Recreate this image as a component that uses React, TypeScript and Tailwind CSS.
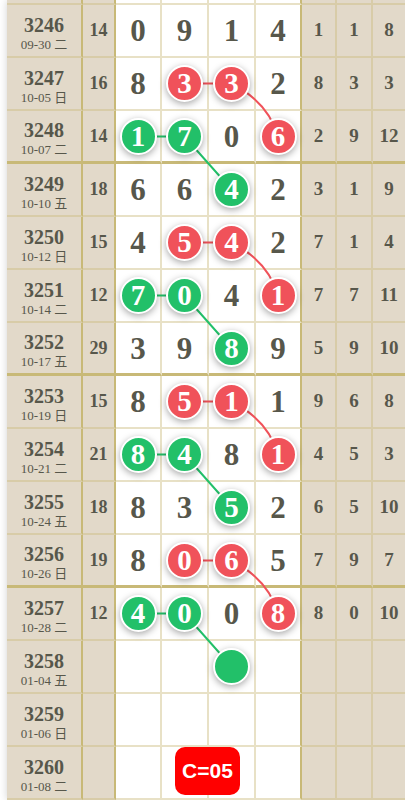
import React from 'react';

type Mark = 'r' | 'g' | undefined;

interface Row {
    id: string;
    date: string;
    sum: string;
    nums: (string | null)[];
    marks: Mark[];
    right: string[];
    thick?: boolean;
}

const rows: Row[] = [
    { id: '3246', date: '09-30 二', sum: '14', nums: ['0', '9', '1', '4'], marks: [], right: ['1', '1', '8'] },
    { id: '3247', date: '10-05 日', sum: '16', nums: ['8', '3', '3', '2'], marks: [undefined, 'r', 'r'], right: ['8', '3', '3'] },
    { id: '3248', date: '10-07 二', sum: '14', nums: ['1', '7', '0', '6'], marks: ['g', 'g', undefined, 'r'], right: ['2', '9', '12'], thick: true },
    { id: '3249', date: '10-10 五', sum: '18', nums: ['6', '6', '4', '2'], marks: [undefined, undefined, 'g'], right: ['3', '1', '9'] },
    { id: '3250', date: '10-12 日', sum: '15', nums: ['4', '5', '4', '2'], marks: [undefined, 'r', 'r'], right: ['7', '1', '4'] },
    { id: '3251', date: '10-14 二', sum: '12', nums: ['7', '0', '4', '1'], marks: ['g', 'g', undefined, 'r'], right: ['7', '7', '11'] },
    { id: '3252', date: '10-17 五', sum: '29', nums: ['3', '9', '8', '9'], marks: [undefined, undefined, 'g'], right: ['5', '9', '10'], thick: true },
    { id: '3253', date: '10-19 日', sum: '15', nums: ['8', '5', '1', '1'], marks: [undefined, 'r', 'r'], right: ['9', '6', '8'] },
    { id: '3254', date: '10-21 二', sum: '21', nums: ['8', '4', '8', '1'], marks: ['g', 'g', undefined, 'r'], right: ['4', '5', '3'] },
    { id: '3255', date: '10-24 五', sum: '18', nums: ['8', '3', '5', '2'], marks: [undefined, undefined, 'g'], right: ['6', '5', '10'] },
    { id: '3256', date: '10-26 日', sum: '19', nums: ['8', '0', '6', '5'], marks: [undefined, 'r', 'r'], right: ['7', '9', '7'], thick: true },
    { id: '3257', date: '10-28 二', sum: '12', nums: ['4', '0', '0', '8'], marks: ['g', 'g', undefined, 'r'], right: ['8', '0', '10'] },
    { id: '3258', date: '01-04 五', sum: '', nums: [null, null, '', null], marks: [undefined, undefined, 'g'], right: ['', '', ''] },
    { id: '3259', date: '01-06 日', sum: '', nums: [null, null, null, null], marks: [], right: ['', '', ''] },
    { id: '3260', date: '01-08 二', sum: '', nums: [null, null, null, null], marks: [], right: ['', '', ''] },
];

const serif = "font-['Liberation_Serif','Times_New_Roman',serif]";

// column widths (border-box)
const mainW = ['w-[46px]', 'w-[47px]', 'w-[47px]', 'w-[46px]'];
const mainR = [
    'border-r-2 border-r-[#cbbd80]/45',
    'border-r-2 border-r-[#cbbd80]/45',
    'border-r-2 border-r-[#cbbd80]/45',
    'border-r-2 border-r-[#c8b977]',
];
const rightW = ['w-[35px] border-r-2 border-r-[#cbbd80]/45', 'w-[36px] border-r-2 border-r-[#cbbd80]/45', 'flex-1'];

function bottom(thick?: boolean) {
    return thick ? 'border-b-[3px] border-b-[#c8b977]' : 'border-b-2 border-b-[#cbbd80]/45';
}

function Ball({ mark, value }: { mark: 'r' | 'g'; value: string }) {
    return (
        <div
            className={`relative z-10 flex h-[37px] w-[37px] items-center justify-center rounded-full border-2 border-white shadow-[0_2px_7px_rgba(0,0,0,0.35)] ${
                mark === 'r' ? 'bg-[#f0525a]' : 'bg-[#22c069]'
            }`}
        >
            <span className={`${serif} text-[29px] font-bold leading-none text-white`}>{value}</span>
        </div>
    );
}

function TableRow({ row, last }: { row: Row; last?: boolean }) {
    const b = bottom(row.thick);
    return (
        <div className="flex h-[53px]">
            <div className={`flex w-[76px] flex-col items-center justify-center pt-[6px] bg-[#e2d9c9] border-r-2 border-r-[#c8b977] ${b}`}>
                <span className={`${serif} text-[20px] font-bold leading-[22px] text-[#57574b]`}>{row.id}</span>
                <span className={`font-['Liberation_Serif','Noto_Sans_CJK_SC',serif] text-[13px] leading-[18px] text-[#57574b]`}>{row.date}</span>
            </div>
            <div className={`flex w-[33px] items-center justify-center bg-[#e2d9c9] border-r-2 border-r-[#c8b977] ${b}`}>
                <span className={`${serif} text-[18px] font-bold text-[#57574b]`}>{row.sum}</span>
            </div>
            <div className="relative flex">
                {row.nums.map((n, i) => {
                    const m = row.marks[i];
                    return (
                        <div key={i} className={`flex items-center justify-center bg-white ${mainW[i]} ${mainR[i]} ${b}`}>
                            {m ? (
                                <Ball mark={m} value={n ?? ''} />
                            ) : (
                                <span className={`${serif} text-[31px] font-bold leading-none text-[#57574b]`}>{n}</span>
                            )}
                        </div>
                    );
                })}
                {last && (
                    <div className="absolute left-[59px] top-0 flex h-[48px] w-[65px] items-center justify-center rounded-[10px] bg-[#ff0000]">
                        <span className="font-['Liberation_Sans',Arial,sans-serif] text-[21px] font-bold text-white">C=05</span>
                    </div>
                )}
            </div>
            {row.right.map((v, i) => (
                <div key={i} className={`flex items-center justify-center bg-[#e2d9c9] ${rightW[i]} ${b}`}>
                    <span className={`${serif} text-[19px] font-bold text-[#57574b]`}>{v}</span>
                </div>
            ))}
        </div>
    );
}

function Links() {
    const cy = (k: number) => 30.5 + 53 * k;
    const x0 = 138;
    const x1 = 184.5;
    const x2 = 231.5;
    const x3 = 278;
    return (
        <svg className="pointer-events-none absolute left-0 top-0 z-[5]" width="405" height="800">
            {[1, 4, 7, 10].map((k) => (
                <path
                    key={'r' + k}
                    d={`M${x1} ${cy(k)} L${x2} ${cy(k)} Q${x2 + 37} ${cy(k) + 19} ${x3} ${cy(k + 1)}`}
                    fill="none"
                    stroke="#f0525a"
                    strokeWidth="2"
                />
            ))}
            {[2, 5, 8, 11].map((k) => (
                <path
                    key={'g' + k}
                    d={`M${x0} ${cy(k)} L${x1} ${cy(k)} L${x2} ${cy(k + 1)}`}
                    fill="none"
                    stroke="#22c069"
                    strokeWidth="2"
                />
            ))}
        </svg>
    );
}

export default function App() {
    const b = bottom(false);
    return (
        <div className="relative h-[800px] w-[405px] overflow-hidden bg-white">
            <Links />
            <div className="ml-[7px] shadow-[0_0_8px_rgba(0,0,0,0.18)]">
                {/* tail of the previous row */}
                <div className="flex h-[5px]">
                    <div className={`w-[76px] bg-[#e2d9c9] border-r-2 border-r-[#c8b977] ${b}`} />
                    <div className={`w-[33px] bg-[#e2d9c9] border-r-2 border-r-[#c8b977] ${b}`} />
                    {mainW.map((w, i) => (
                        <div key={i} className={`bg-white ${w} ${mainR[i]} ${b}`} />
                    ))}
                    {rightW.map((w, i) => (
                        <div key={i} className={`bg-[#e2d9c9] ${w} ${b}`} />
                    ))}
                </div>
                {rows.map((r, i) => (
                    <TableRow key={r.id} row={r} last={i === rows.length - 1} />
                ))}
            </div>
        </div>
    );
}
